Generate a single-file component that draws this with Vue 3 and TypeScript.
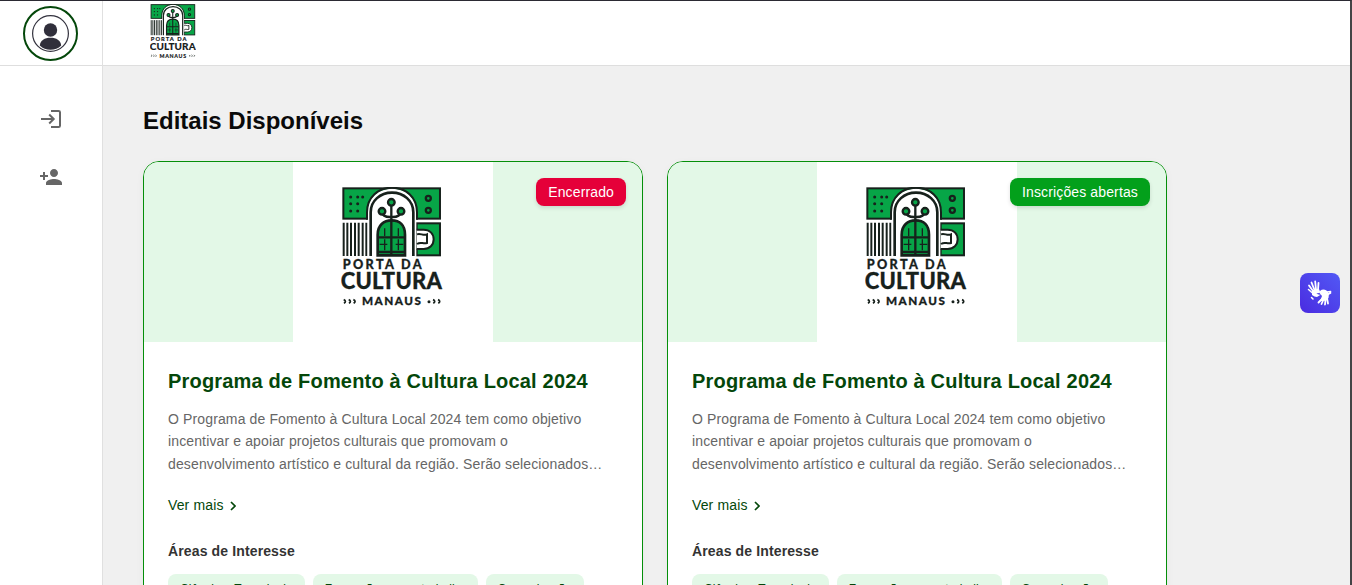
<script setup lang="ts">
interface Edital {
  id: number
  status: string
  open: boolean
  title: string
  description: string[]
  areas: string[]
}

const description = [
  'O Programa de Fomento à Cultura Local 2024 tem como objetivo',
  'incentivar e apoiar projetos culturais que promovam o',
  'desenvolvimento artístico e cultural da região. Serão selecionados…',
]
const areas = ['Ciência e Tecnologia', 'Formação para o trabalho', 'Comunicação']

const editais: Edital[] = [
  { id: 1, status: 'Encerrado', open: false, title: 'Programa de Fomento à Cultura Local 2024', description, areas },
  { id: 2, status: 'Inscrições abertas', open: true, title: 'Programa de Fomento à Cultura Local 2024', description, areas },
]
</script>

<template>
  <svg class="defs" aria-hidden="true">
    <symbol id="logo" viewBox="48 36 306 358">
      <g stroke="#17211c" stroke-width="6" fill="#07a547">
        <rect x="55" y="40" width="290" height="91" />
        <rect x="275" y="145" width="70" height="96" />
      </g>
      <path d="M56 143V243M67 143V243M78 143V243M90 143V243M101 143V243M113 143V243M124 143V243" stroke="#17211c" stroke-width="6" />
      <path d="M128 246V112C128 68 160 41 201 41S274 68 274 112V246Z" fill="#fff" />
      <path d="M126 134V112C126 66 160 38 201 38S276 66 276 112V134" fill="none" stroke="#17211c" stroke-width="6" />
      <path d="M137 243V112C137 77 166 53 201 53S265 77 265 112V243" fill="none" stroke="#17211c" stroke-width="8" />
      <path d="M158 241V179C158 151 176 136 200 136S240 151 240 179V241Z" fill="#07a547" stroke="#17211c" stroke-width="8" />
      <path d="M199 93V241M199 126C180 127 172 119 171 111M199 126C218 127 226 119 227 111M160 187H238M160 231H238" fill="none" stroke="#17211c" stroke-width="7" />
      <path d="M179 160V183M179 193V226M220 160V183M220 193V226M164 208H187M212 208H235" stroke="#17211c" stroke-width="4" />
      <g fill="#07a547" stroke="#17211c" stroke-width="7">
        <circle cx="199" cy="82" r="10" /><circle cx="171" cy="109" r="10" /><circle cx="228" cy="109" r="10" />
        <circle cx="310" cy="70" r="7.500" /><circle cx="310" cy="106" r="7.500" />
      </g>
      <g fill="#17211c">
        <circle cx="77" cy="66" r="4.500" /><circle cx="98" cy="66" r="4.500" /><circle cx="113" cy="66" r="4.500" />
        <circle cx="77" cy="86" r="4.500" /><circle cx="98" cy="86" r="4.500" />
        <circle cx="77" cy="108" r="4.500" /><circle cx="98" cy="108" r="4.500" />
      </g>
      <path d="M275 164H296C314 164 326 176 326 193S314 222 296 222H275" fill="#fff" stroke="#17211c" stroke-width="6" />
      <path d="M276 178C287 173 294 184 306 178V204C294 208 288 199 276 207" fill="#fff" stroke="#17211c" stroke-width="6" />
      <g fill="#17211c" stroke="#17211c" stroke-width="0.800" font-family="Lato, 'Liberation Sans', sans-serif" font-weight="900">
        <text x="53" y="281" font-size="38" textLength="237" lengthAdjust="spacing">PORTA DA</text>
        <text x="47" y="342" font-size="66" textLength="304" lengthAdjust="spacing">CULTURA</text>
        <text x="111" y="391" font-size="35" textLength="177" lengthAdjust="spacing">MANAUS</text>
      </g>
      <path d="M56 374Q66 378 57 385M71 374Q81 378 72 385M85 374Q95 378 86 385M324 374Q334 378 325 385M339 374Q349 378 340 385" fill="none" stroke="#17211c" stroke-width="5" />
      <circle cx="312" cy="380" r="4.500" fill="#17211c" />
    </symbol>
  </svg>

  <div class="app">
    <aside class="sidebar">
      <div class="profile">
        <div class="avatar">
          <svg width="37" height="37" viewBox="0 0 37 37">
            <circle cx="18.5" cy="18.5" r="17.9" fill="#fff" stroke="#34333f" stroke-width="1.2" />
            <circle cx="18.5" cy="15" r="6.7" fill="#302f3b" />
            <path d="M7.8 30.4C8.5 25.3 12.5 22.8 18.5 22.8S28.5 25.3 29.2 30.4Q24.8 34.8 18.5 34.8T7.8 30.4Z" fill="#302f3b" />
          </svg>
        </div>
      </div>
      <nav class="nav">
        <svg width="24" height="24" viewBox="0 0 24 24">
          <path d="M2 12H15M10.200 7.500L14.700 12L10.200 16.500M12 4H19.500Q21 4 21 5.300V18.700Q21 20 19.500 20H12" fill="none" stroke="#666" stroke-width="2" />
        </svg>
        <svg width="24" height="24" viewBox="0 0 24 24">
          <path d="M15 12c2.21 0 4-1.79 4-4s-1.79-4-4-4-4 1.79-4 4 1.79 4 4 4zm-9-2V7H4v3H1v2h3v3h2v-3h3v-2H6zm9 4c-2.67 0-8 1.34-8 4v2h16v-2c0-2.660-5.330-4-8-4z" fill="#666" />
        </svg>
      </nav>
    </aside>

    <div class="page">
      <header class="topbar">
        <svg class="brand"><use href="#logo" /></svg>
      </header>
      <main class="content">
        <h1>Editais Disponíveis</h1>
        <div class="cards">
          <article v-for="edital in editais" :key="edital.id" class="card">
            <div class="cover">
              <div class="poster"><svg class="poster-logo"><use href="#logo" /></svg></div>
              <span class="badge" :class="{ open: edital.open }">{{ edital.status }}</span>
            </div>
            <div class="body">
              <h2>{{ edital.title }}</h2>
              <p class="description"><span v-for="line in edital.description" :key="line">{{ line }}</span></p>
              <a class="more">Ver mais
                <svg class="chevron" width="6" height="10" viewBox="0 0 6 10"><path d="M1 1L5 5L1 9" fill="none" stroke="#04470a" stroke-width="1.7" /></svg>
              </a>
              <h3>Áreas de Interesse</h3>
              <div class="chips"><span v-for="area in edital.areas" :key="area" class="chip">{{ area }}</span></div>
            </div>
          </article>
        </div>
      </main>
    </div>

    <button class="libras" aria-label="Libras">
      <svg width="40" height="40" viewBox="0 0 40 40">
        <g fill="none" stroke="#fff" stroke-linecap="round" stroke-linejoin="round">
          <path d="M13 18L9 12.500M14.500 17L11.500 9.500M16 16.500L15.200 8.500M18 17L18.500 10" stroke-width="1.8" />
          <path d="M12.500 20L8.500 16.500M11.500 24.500L13 26" stroke-width="1.500" />
          <path d="M22 26L18.500 29.500M23.500 26.500L21.500 31M25.500 26.500L25 31.500M27 25L28 30.500" stroke-width="1.8" />
          <path d="M22 18.500L17.500 19.500M27 19L30.500 18.500M28.500 21L30.500 20" stroke-width="1.7" />
        </g>
        <path d="M12 17.500L18.800 15.500L20 18.500L16.500 20.500Q18 22 21 21.500L17 24L14.500 23.500L12 22Z" fill="#fff" />
        <path d="M20 18Q23 15.500 26.500 17.500L29 20.500L28.500 25L25.500 28L20.500 27L22 23L19.500 20Z" fill="#fff" />
      </svg>
    </button>
  </div>
</template>

<style>
body {
  background: #f0f0f0;
  overflow: hidden;
}
</style>

<style scoped>
.defs {
  position: absolute;
  width: 0;
  height: 0;
}
.app {
  box-sizing: border-box;
  display: flex;
  width: 1352px;
  height: 585px;
  overflow: hidden;
  border-top: 1px solid #2b2a33;
  border-right: 2px solid #444446;
  background: #f0f0f0;
  font-family: "Liberation Sans", Arial, sans-serif;
}
svg {
  display: block;
}
.sidebar {
  flex: 0 0 102px;
  background: #fff;
  border-right: 1px solid #e0e0e0;
}
.profile {
  box-sizing: border-box;
  height: 65px;
  padding: 5px 0 0 23px;
  border-bottom: 1px solid #dedede;
}
.avatar {
  box-sizing: border-box;
  display: grid;
  place-items: center;
  width: 55px;
  height: 55px;
  border: 2px solid #04470a;
  border-radius: 50%;
}
.nav {
  display: flex;
  flex-direction: column;
  align-items: center;
  gap: 34px;
  padding-top: 41px;
}
.page {
  flex: 1;
  min-width: 0;
}
.topbar {
  box-sizing: border-box;
  height: 65px;
  padding: 2.6px 0 0 47.4px;
  background: #fff;
  border-bottom: 1px solid #dedede;
}
.brand {
  width: 46.1px;
  height: 54px;
}
.content {
  padding: 40px 40px 0;
}
h1 {
  margin: 0 0 25px;
  color: #0a0a0a;
  font-size: 24px;
  line-height: 30px;
}
.cards {
  display: flex;
  gap: 24px;
}
.card {
  box-sizing: border-box;
  width: 500px;
  height: 600px;
  flex: none;
  overflow: hidden;
  background: #fff;
  border: 1px solid #058f0a;
  border-radius: 16px;
  box-shadow: 0 2px 8px rgba(0, 0, 0, 0.04);
}
.cover {
  position: relative;
  display: flex;
  justify-content: center;
  height: 180px;
  background: #e3f8e7;
}
.poster {
  box-sizing: border-box;
  width: 200px;
  padding: 24.8px 0 0 48px;
  background: #fff;
}
.poster-logo {
  width: 102px;
  height: 119.3px;
}
.badge {
  position: absolute;
  top: 16px;
  right: 16px;
  padding: 0 12px;
  border-radius: 8px;
  background: #e50039;
  box-shadow: 0 2px 4px rgba(0, 0, 0, 0.12);
  color: #fff;
  font-size: 14px;
  line-height: 28px;
  letter-spacing: 0.00938em;
}
.badge.open {
  background: #03a01b;
}
.body {
  padding: 24px;
  letter-spacing: 0.131px;
}
h2 {
  margin: 0 0 12px;
  color: #04470a;
  font-size: 20px;
  line-height: 30px;
  letter-spacing: 0.00938em;
}
.description {
  margin: 0 0 18px;
  color: #666;
  font-size: 14px;
  line-height: 22.4px;
}
.description span {
  display: block;
  white-space: nowrap;
}
.more {
  display: flex;
  align-items: center;
  gap: 6px;
  color: #04470a;
  font-size: 14px;
  line-height: 24px;
}
.chevron {
  margin-top: 2px;
}
h3 {
  margin: 24px 0 13px;
  color: #333;
  font-size: 14px;
  line-height: 20px;
}
.chips {
  display: flex;
  gap: 8px;
}
.chip {
  padding: 6px 12px;
  border-radius: 8px;
  background: #e3f8e7;
  color: #04470a;
  font-size: 12px;
  line-height: 18px;
  letter-spacing: 0.00938em;
  white-space: nowrap;
}
.libras {
  position: absolute;
  top: 273px;
  left: 1300px;
  width: 40px;
  height: 40px;
  padding: 0;
  border: 0;
  border-radius: 8px;
  background: linear-gradient(45deg, #4a2be0, #5259f5);
}
</style>
